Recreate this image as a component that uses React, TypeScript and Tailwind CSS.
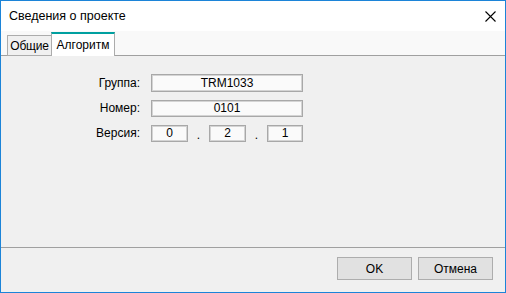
export default function App() {
  const font = { fontFamily: '"Liberation Sans", Arial, sans-serif' };
  const field =
    "bg-[#fafafa] border border-[#a8a8a8] shadow-[inset_0_0_0_1px_#d4d4d4] flex items-center justify-center text-[12px] text-black";

  return (
    <div
      className="w-[506px] h-[293px] border border-[#1c84d8] bg-[#f0f0f0] flex flex-col overflow-hidden"
      style={font}
    >
      {/* Title bar */}
      <div className="h-[30px] bg-white flex items-center justify-between pl-[8px] pr-[9px]">
        <span className="text-[12.5px] text-black">Сведения о проекте</span>
        <svg width="11" height="11" viewBox="0 0 11 11">
          <path d="M0.5 0.5L10.5 10.5M10.5 0.5L0.5 10.5" stroke="#000" strokeWidth="1.1" />
        </svg>
      </div>

      {/* Tab strip */}
      <div className="h-[25px] bg-[#f9f9f9] border-b border-[#a0a0a0] flex items-end pl-[6px]">
        <div className="h-[21px] -mb-px w-[44px] bg-[#f0f0f0] border border-[#acacac] border-r-0 flex items-center justify-center text-[12px] text-black tracking-[-0.2px]">
          Общие
        </div>
        <div className="h-[24px] -mb-px w-[64px] bg-white border-x border-[#acacac] border-t-2 border-t-[#00a0a0] flex items-start justify-center pt-[3px] text-[12px] text-black relative z-10">
          <span className="relative -top-[1px]">Алгоритм</span>
        </div>
        <div className="flex-1" />
      </div>

      {/* Tab page */}
      <div className="flex-1 border-b border-[#a0a0a0] pt-[18px]">
        <div className="flex flex-col gap-[7px]">
          <div className="flex items-center">
            <span className="w-[140px] pr-[1px] text-right text-[12px] text-black">Группа:</span>
            <div className={`ml-[10px] w-[152px] h-[18px] ${field}`}>TRM1033</div>
          </div>
          <div className="flex items-center">
            <span className="w-[140px] pr-[1px] text-right text-[12px] text-black">Номер:</span>
            <div className={`ml-[10px] w-[152px] h-[17px] ${field}`}>0101</div>
          </div>
          <div className="flex items-center">
            <span className="w-[140px] pr-[1px] text-right text-[12px] text-black">Версия:</span>
            <div className="ml-[10px] flex items-end">
              <div className={`w-[37px] h-[17px] ${field}`}>0</div>
              <span className="w-[21px] text-center text-[12px] leading-[14px] text-black">.</span>
              <div className={`w-[37px] h-[17px] ${field}`}>2</div>
              <span className="w-[21px] text-center text-[12px] leading-[14px] text-black">.</span>
              <div className={`w-[36px] h-[17px] ${field}`}>1</div>
            </div>
          </div>
        </div>
      </div>

      {/* Footer */}
      <div className="h-[44px] flex items-start justify-end gap-[6px] pt-[9px] pr-[12px]">
        <button className="w-[75px] h-[23px] bg-[#e1e1e1] border border-[#adadad] text-[12px] text-black">
          OK
        </button>
        <button className="w-[75px] h-[23px] bg-[#e1e1e1] border border-[#adadad] text-[12px] text-black">
          Отмена
        </button>
      </div>
    </div>
  );
}
